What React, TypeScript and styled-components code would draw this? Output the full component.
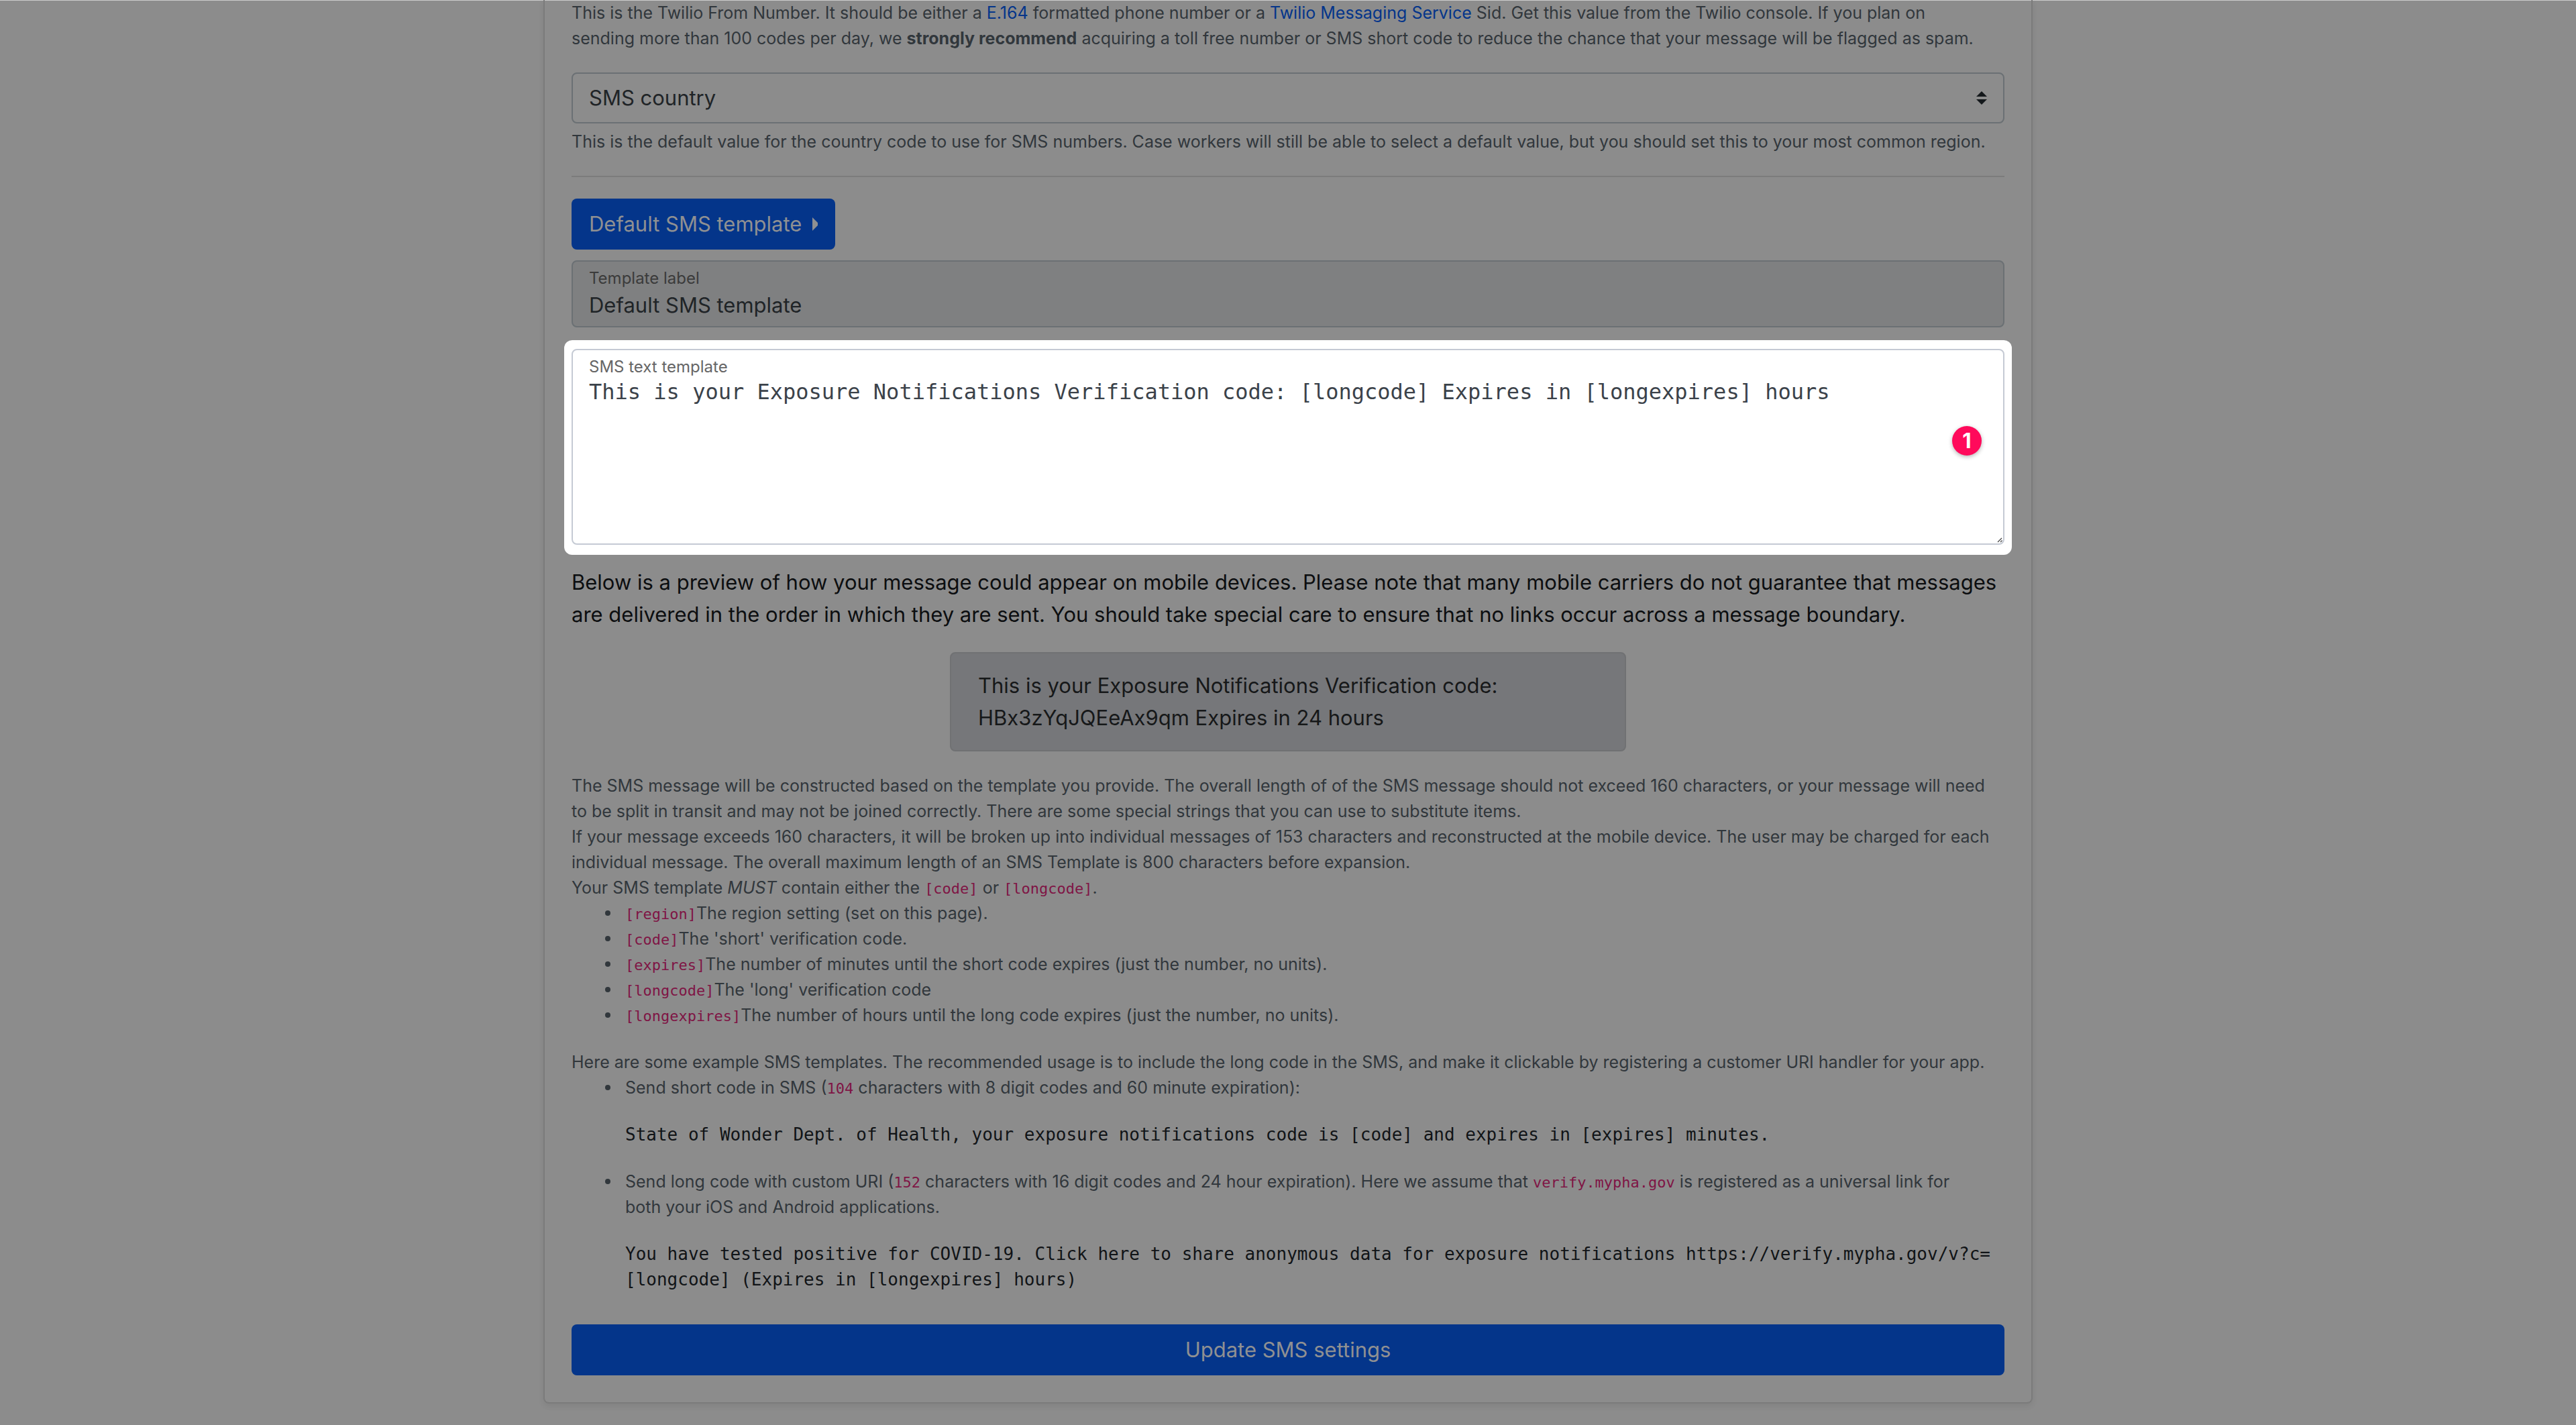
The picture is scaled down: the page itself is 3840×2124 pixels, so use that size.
import React from "react";
import styled, { createGlobalStyle } from "styled-components";

const sans = `Inter, "Liberation Sans", sans-serif`;
const mono = `"DejaVu Sans Mono", "Liberation Mono", monospace`;

const GlobalStyle = createGlobalStyle`
  *, *::before, *::after { box-sizing: border-box; }
  body {
    margin: 0;
    background: #8c8c8c;
    color: #0c0e10;
    font-family: ${sans};
    font-size: 31px;
    line-height: 48px;
  }
`;

const Page = styled.main`
  min-height: 100vh;
  box-shadow: inset 0 1px 0 #cccccc;
`;

const Card = styled.form`
  width: 100%;
  max-width: 2220px;
  margin: 0 auto;
  padding: 0 40px 40px;
  border: 2px solid #7b7b7b;
  border-top: 0;
  border-radius: 0 0 8px 8px;
  box-shadow: 0 4px 8px rgba(0, 0, 0, 0.07);
`;

const Help = styled.p<{ $gap?: number }>`
  margin: 0 0 ${(p) => p.$gap ?? 0}px;
  color: #31373c;
  font-size: 25px;
  line-height: 38px;
`;

const Link = styled.a`
  color: #04358a;
  text-decoration: none;
`;

const SelectBox = styled.div`
  position: relative;
  margin-bottom: 8px;
`;

const Select = styled.select`
  display: block;
  width: 100%;
  height: 76px;
  padding: 0 56px 0 24px;
  appearance: none;
  border: 2px solid #6b7074;
  border-radius: 8px;
  background: transparent;
  color: #202427;
  font: inherit;
`;

const SelectArrows = styled.svg`
  position: absolute;
  top: 28px;
  right: 26px;
  width: 16px;
  height: 20px;
  pointer-events: none;
`;

const Rule = styled.hr`
  height: 2px;
  margin: 0 0 32px;
  border: 0;
  background: #7c7c7c;
`;

const Button = styled.button<{ $wide?: boolean }>`
  display: flex;
  align-items: center;
  justify-content: center;
  gap: 16px;
  width: ${(p) => (p.$wide ? "100%" : "auto")};
  height: 76px;
  padding: 0 26px;
  border: 0;
  border-radius: 8px;
  background: #04358a;
  color: #8f9092;
  font: inherit;
`;

const Caret = styled.svg`
  width: 8px;
  height: 20px;
`;

const Field = styled.div`
  position: relative;
  display: flex;
  flex-direction: column;
  margin-top: 16px;
  border: 2px solid #6b7074;
  border-radius: 8px;
  background: #7f8081;
`;

const FieldLabel = styled.label`
  padding: 8px 24px 0;
  color: #3b3b3b;
  font-size: 24px;
  line-height: 34px;
`;

const TextInput = styled.input`
  height: 54px;
  padding: 0 24px 10px;
  border: 0;
  background: transparent;
  color: #202427;
  font: inherit;
`;

const Spotlight = styled.div`
  margin: 19px -11px 17px;
  padding: 13px 11px 15px;
  border-radius: 12px;
  background: #ffffff;
`;

const AreaField = styled(Field)`
  margin-top: 0;
  border-color: #c5cad4;
  background: #ffffff;
`;

const AreaLabel = styled(FieldLabel)`
  color: #666666;
`;

const TextArea = styled.textarea`
  display: block;
  width: 100%;
  height: 246px;
  padding: 0 24px;
  resize: vertical;
  border: 0;
  background: transparent;
  color: #3b424a;
  font-family: ${mono};
  font-size: 32px;
  line-height: 40px;

  &::-webkit-resizer {
    background: transparent;
  }
`;

const Grip = styled.svg`
  position: absolute;
  right: 1px;
  bottom: 1px;
  width: 8px;
  height: 8px;
  pointer-events: none;
`;

const Badge = styled.span`
  position: absolute;
  top: 113px;
  right: 32px;
  width: 44px;
  height: 44px;
  border-radius: 50%;
  background: #ff0a5b;
  box-shadow: 0 2px 6px rgba(0, 0, 0, 0.3);
  color: #ffffff;
  font-size: 31px;
  font-weight: 700;
  line-height: 44px;
  text-align: center;
`;

const Note = styled.p`
  margin: 0;
`;

const Preview = styled.div`
  width: 100%;
  max-width: 1008px;
  margin: 32px auto;
  padding: 24px 40px;
  border: 2px solid #707173;
  border-radius: 8px;
  background: #76777a;
  color: #161819;
`;

const List = styled.ul<{ $gap?: number }>`
  margin: 0 0 ${(p) => p.$gap ?? 0}px;
  padding: 0 0 0 80px;
  list-style: none;
  color: #31373c;
  font-size: 25px;
  line-height: 38px;
`;

const Item = styled.li`
  &::before {
    content: "";
    display: inline-block;
    width: 8px;
    height: 8px;
    margin: 0 22px 5px -30px;
    border-radius: 50%;
    background: currentColor;
  }
`;

const Code = styled.code`
  color: #7f1545;
  font-family: ${mono};
  font-size: 22px;
  line-height: 22px;
`;

const Sample = styled.pre`
  margin: 32px 0;
  color: #111417;
  font-family: ${mono};
  font-size: 26px;
  line-height: 38px;
  white-space: pre-wrap;
`;

const tokens = [
  ["[region]", "The region setting (set on this page)."],
  ["[code]", "The 'short' verification code."],
  ["[expires]", "The number of minutes until the short code expires (just the number, no units)."],
  ["[longcode]", "The 'long' verification code"],
  ["[longexpires]", "The number of hours until the long code expires (just the number, no units)."],
];

export default function App() {
  return (
    <Page>
      <GlobalStyle />
      <Card onSubmit={(e) => e.preventDefault()}>
        <Help $gap={32}>
          This is the Twilio From Number. It should be either a <Link href="#e164">E.164</Link> formatted phone
          number or a <Link href="#messaging">Twilio Messaging Service</Link> Sid. Get this value from the Twilio
          console. If you plan on
          <br />
          sending more than 100 codes per day, we <strong>strongly recommend</strong> acquiring a toll free number or
          SMS short code to reduce the chance that your message will be flagged as spam.
        </Help>

        <SelectBox>
          <Select aria-label="SMS country" defaultValue="">
            <option value="">SMS country</option>
          </Select>
          <SelectArrows viewBox="0 0 16 20" aria-hidden="true">
            <path d="M8 0 16 8H0ZM8 20 0 12H16Z" fill="#14181b" />
          </SelectArrows>
        </SelectBox>
        <Help $gap={32}>
          This is the default value for the country code to use for SMS numbers. Case workers will still be able to
          select a default value, but you should set this to your most common region.
        </Help>

        <Rule />

        <Button type="button">
          Default SMS template
          <Caret viewBox="0 0 8 20" aria-hidden="true">
            <path d="M0 0 8 8V12L0 20Z" fill="#8f9092" />
          </Caret>
        </Button>

        <Field>
          <FieldLabel htmlFor="template-label">Template label</FieldLabel>
          <TextInput id="template-label" defaultValue="Default SMS template" readOnly />
        </Field>

        <Spotlight>
          <AreaField>
            <AreaLabel htmlFor="template-text">SMS text template</AreaLabel>
            <TextArea
              id="template-text"
              spellCheck={false}
              defaultValue="This is your Exposure Notifications Verification code: [longcode] Expires in [longexpires] hours"
            />
            <Grip viewBox="0 0 8 8" aria-hidden="true">
              <path d="M1 7 7 1M5 7 7.5 4.5" fill="none" stroke="#444444" strokeWidth="1.2" />
            </Grip>
            <Badge>1</Badge>
          </AreaField>
        </Spotlight>

        <Note>
          Below is a preview of how your message could appear on mobile devices. Please note that many mobile
          carriers do not guarantee that messages are delivered in the order in which they are sent. You should take
          special care to ensure that no links occur across a message boundary.
        </Note>

        <Preview>This is your Exposure Notifications Verification code: HBx3zYqJQEeAx9qm Expires in 24 hours</Preview>

        <Help>
          The SMS message will be constructed based on the template you provide. The overall length of of the SMS
          message should not exceed 160 characters, or your message will need to be split in transit and may not be
          joined correctly. There are some special strings that you can use to substitute items.
        </Help>
        <Help>
          If your message exceeds 160 characters, it will be broken up into individual messages of 153 characters and
          reconstructed at the mobile device. The user may be charged for each individual message. The overall
          maximum length of an SMS Template is 800 characters before expansion.
        </Help>
        <Help>
          Your SMS template <em>MUST</em> contain either the <Code>[code]</Code> or <Code>[longcode]</Code>.
        </Help>
        <List $gap={32}>
          {tokens.map(([name, text]) => (
            <Item key={name}>
              <Code>{name}</Code>
              {text}
            </Item>
          ))}
        </List>

        <Help>
          Here are some example SMS templates. The recommended usage is to include the long code in the SMS, and make
          it clickable by registering a customer URI handler for your app.
        </Help>
        <List $gap={48}>
          <Item>
            Send short code in SMS (<Code>104</Code> characters with 8 digit codes and 60 minute expiration):
            <Sample>
              State of Wonder Dept. of Health, your exposure notifications code is [code] and expires in [expires]
              minutes.
            </Sample>
          </Item>
          <Item>
            Send long code with custom URI (<Code>152</Code> characters with 16 digit codes and 24 hour expiration).
            Here we assume that <Code>verify.mypha.gov</Code> is registered as a universal link for
            <br />
            both your iOS and Android applications.
            <Sample>
              You have tested positive for COVID-19. Click here to share anonymous data for exposure notifications
              https://verify.mypha.gov/v?c=<wbr />[longcode] (Expires in [longexpires] hours)
            </Sample>
          </Item>
        </List>

        <Button type="submit" $wide>
          Update SMS settings
        </Button>
      </Card>
    </Page>
  );
}
